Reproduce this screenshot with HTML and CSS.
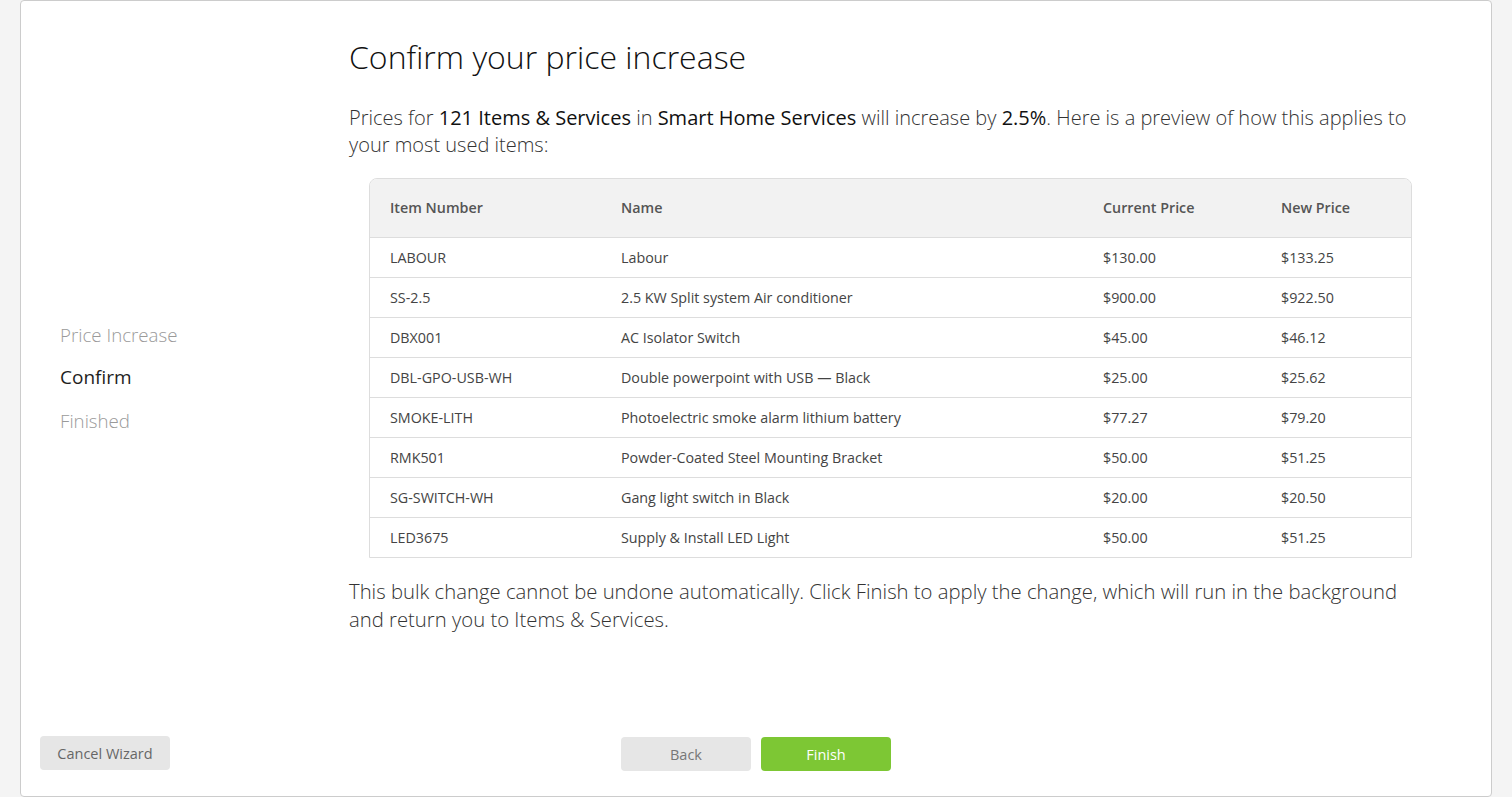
FILE: index.html
```html
<!DOCTYPE html>
<html lang="en">
<head>
<meta charset="utf-8">
<title>Confirm your price increase</title>
<link rel="stylesheet" href="styles.css">
</head>
<body>
<div class="card">
  <div class="card-body">
    <nav class="steps">
      <div class="step">Price Increase</div>
      <div class="step active">Confirm</div>
      <div class="step">Finished</div>
    </nav>
    <main class="main">
      <h1 class="title">Confirm your price increase</h1>
      <p class="lead">Prices for <b>121 Items &amp; Services</b> in <b>Smart Home Services</b> will increase by <b>2.5%</b>. Here is a preview of how this applies to your most used items:</p>
      <div class="table-wrap">
        <table class="items">
          <colgroup>
            <col class="c1"><col class="c2"><col class="c3"><col class="c4">
          </colgroup>
          <thead>
            <tr><th>Item Number</th><th>Name</th><th>Current Price</th><th>New Price</th></tr>
          </thead>
          <tbody>
            <tr><td>LABOUR</td><td>Labour</td><td>$130.00</td><td>$133.25</td></tr>
            <tr><td>SS-2.5</td><td>2.5 KW Split system Air conditioner</td><td>$900.00</td><td>$922.50</td></tr>
            <tr><td>DBX001</td><td>AC Isolator Switch</td><td>$45.00</td><td>$46.12</td></tr>
            <tr><td>DBL-GPO-USB-WH</td><td>Double powerpoint with USB — Black</td><td>$25.00</td><td>$25.62</td></tr>
            <tr><td>SMOKE-LITH</td><td>Photoelectric smoke alarm lithium battery</td><td>$77.27</td><td>$79.20</td></tr>
            <tr><td>RMK501</td><td>Powder-Coated Steel Mounting Bracket</td><td>$50.00</td><td>$51.25</td></tr>
            <tr><td>SG-SWITCH-WH</td><td>Gang light switch in Black</td><td>$20.00</td><td>$20.50</td></tr>
            <tr><td>LED3675</td><td>Supply &amp; Install LED Light</td><td>$50.00</td><td>$51.25</td></tr>
          </tbody>
        </table>
      </div>
      <p class="note">This bulk change cannot be undone automatically. Click Finish to apply the change, which will run in the background and return you to Items &amp; Services.</p>
    </main>
  </div>
  <footer class="card-footer">
    <div class="footer-left"><button class="btn btn-grey cancel">Cancel Wizard</button></div>
    <div class="footer-center">
      <button class="btn btn-grey back">Back</button>
      <button class="btn btn-green">Finish</button>
    </div>
    <div class="footer-right"></div>
  </footer>
</div>
</body>
</html>
```

FILE: styles.css
```css
* { box-sizing: border-box; }

html, body {
  margin: 0;
  padding: 0;
  background: #f4f4f4;
  font-family: "Open Sans", "Liberation Sans", sans-serif;
  color: #333;
}

.card {
  margin: 0 20px;
  height: 797px;
  background: #fff;
  border: 1px solid #cccccc;
  border-radius: 4px;
  display: flex;
  flex-direction: column;
}

.card-body {
  flex: 1;
  display: flex;
}

.steps {
  width: 328px;
  flex: none;
  padding: 312px 0 0 39px;
}

.step {
  font-size: 18.7px;
  font-weight: 300;
  line-height: 43px;
  color: #9a9a9a;
}

.step.active {
  font-size: 19px;
  color: #1e1e1e;
  font-weight: 400;
}

.main {
  width: 1083px;
  flex: none;
}

.title {
  margin: 34px 0 0;
  font-size: 32px;
  font-weight: 300;
  line-height: 44px;
  color: #111;
}

.lead {
  margin: 25px 0 0;
  font-size: 20px;
  font-weight: 300;
  line-height: 27px;
  color: #333;
}

.lead b {
  font-weight: 400;
  color: #111;
}

.table-wrap {
  margin: 20px 20px 0;
  border: 1px solid #dddddd;
  border-radius: 8px 8px 0 0;
  overflow: hidden;
}

.items {
  width: 100%;
  border-collapse: collapse;
  table-layout: fixed;
  font-size: 14.3px;
}

.items .c1 { width: 231px; }
.items .c2 { width: 482px; }
.items .c3 { width: 178px; }

.items th {
  height: 58px;
  background: #f2f2f2;
  text-align: left;
  font-weight: 600;
  color: #555;
  padding: 0 20px;
  border-bottom: 1px solid #dddddd;
}

.items td {
  height: 40px;
  padding: 0 20px;
  color: #444;
  border-bottom: 1px solid #dddddd;
}

.items tbody tr:last-child td {
  border-bottom: none;
}

.note {
  margin: 19px 0 0;
  font-size: 20.3px;
  font-weight: 300;
  line-height: 28px;
  color: #333;
}

.card-footer {
  display: grid;
  grid-template-columns: 1fr auto 1fr;
  align-items: end;
  padding: 0 0 25px;
}

.footer-left {
  padding-left: 19px;
  align-self: start;
}

.footer-center {
  display: flex;
  gap: 10px;
  padding-top: 1px;
}

.btn {
  font-family: "Open Sans", "Liberation Sans", sans-serif;
  font-size: 14.5px;
  height: 34px;
  border: none;
  border-radius: 4px;
  padding: 0;
  cursor: pointer;
}

.btn-grey {
  background: #e6e6e6;
  color: #666;
}

.cancel { width: 130px; }
.back { width: 130px; color: #777; }

.btn-green {
  width: 130px;
  background: #7dc734;
  color: #fff;
}
```
